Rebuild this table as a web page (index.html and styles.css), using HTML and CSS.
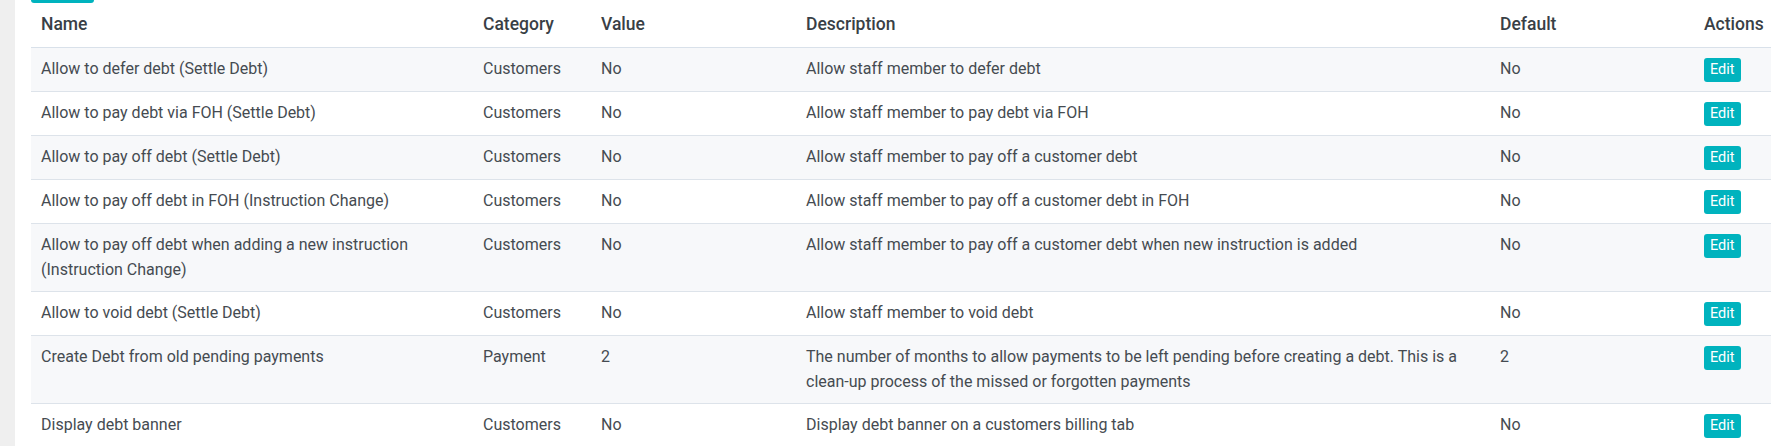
FILE: index.html
```html
<!DOCTYPE html>
<html lang="en">
<head>
<meta charset="utf-8">
<title>Settings</title>
<link rel="stylesheet" href="styles.css">
</head>
<body>
<div class="layout">
  <aside class="sidebar"></aside>
  <main class="content">
    <div class="tab-strip"><span class="tab"></span></div>
    <table class="settings">
      <colgroup>
        <col class="c-name"><col class="c-cat"><col class="c-val"><col class="c-desc"><col class="c-def"><col class="c-act">
      </colgroup>
      <thead>
        <tr><th>Name</th><th>Category</th><th>Value</th><th>Description</th><th>Default</th><th>Actions</th></tr>
      </thead>
      <tbody>
        <tr><td>Allow to defer debt (Settle Debt)</td><td>Customers</td><td>No</td><td>Allow staff member to defer debt</td><td>No</td><td><button class="btn-edit">Edit</button></td></tr>
        <tr><td>Allow to pay debt via FOH (Settle Debt)</td><td>Customers</td><td>No</td><td>Allow staff member to pay debt via FOH</td><td>No</td><td><button class="btn-edit">Edit</button></td></tr>
        <tr><td>Allow to pay off debt (Settle Debt)</td><td>Customers</td><td>No</td><td>Allow staff member to pay off a customer debt</td><td>No</td><td><button class="btn-edit">Edit</button></td></tr>
        <tr><td>Allow to pay off debt in FOH (Instruction Change)</td><td>Customers</td><td>No</td><td>Allow staff member to pay off a customer debt in FOH</td><td>No</td><td><button class="btn-edit">Edit</button></td></tr>
        <tr><td>Allow to pay off debt when adding a new instruction (Instruction Change)</td><td>Customers</td><td>No</td><td>Allow staff member to pay off a customer debt when new instruction is added</td><td>No</td><td><button class="btn-edit">Edit</button></td></tr>
        <tr><td>Allow to void debt (Settle Debt)</td><td>Customers</td><td>No</td><td>Allow staff member to void debt</td><td>No</td><td><button class="btn-edit">Edit</button></td></tr>
        <tr><td>Create Debt from old pending payments</td><td>Payment</td><td>2</td><td>The number of months to allow payments to be left pending before creating a debt. This is a clean-up process of the missed or forgotten payments</td><td>2</td><td><button class="btn-edit">Edit</button></td></tr>
        <tr><td>Display debt banner</td><td>Customers</td><td>No</td><td>Display debt banner on a customers billing tab</td><td>No</td><td><button class="btn-edit">Edit</button></td></tr>
      </tbody>
    </table>
  </main>
</div>
</body>
</html>
```

FILE: styles.css
```css
* { box-sizing: border-box; }
html, body {
  margin: 0;
  height: 100%;
  overflow: hidden;
  background: #ffffff;
}
body {
  font-family: Roboto, "Liberation Sans", Arial, sans-serif;
  font-size: 16px;
  color: #454b51;
}
.layout {
  display: flex;
  min-height: 100%;
}
.sidebar {
  flex: 0 0 15px;
  background: #efefef;
}
.content {
  flex: 1 1 auto;
  padding-left: 16px;
  min-width: 0;
}
.tab-strip {
  height: 3px;
  display: flex;
}
.tab {
  width: 63px;
  height: 3px;
  background: #00b3be;
  border-radius: 0 0 4px 4px;
}
.settings {
  width: 1740px;
  table-layout: fixed;
  border-collapse: collapse;
}
.c-name { width: 442px; }
.c-cat { width: 118px; }
.c-val { width: 205px; }
.c-desc { width: 694px; }
.c-def { width: 204px; }
.c-act { width: 77px; }
.settings th {
  text-align: left;
  font-size: 17.5px;
  font-weight: 500;
  color: #393f46;
  padding: 9px 10px 11px;
  line-height: 24px;
  border-bottom: 1px solid #d9e1ea;
  white-space: nowrap;
}
.settings td {
  padding: 9px 10px;
  line-height: 24.5px;
  vertical-align: top;
  border-bottom: 1px solid #dde3ea;
}
.settings tbody tr:nth-child(odd) td {
  background: #f7f8fa;
}
.btn-edit {
  display: inline-block;
  vertical-align: top;
  margin-top: 1px;
  height: 24px;
  padding: 0 6px;
  border: 0;
  border-radius: 3px;
  background: #00b3be;
  color: #ffffff;
  font-family: Roboto, "Liberation Sans", Arial, sans-serif;
  font-size: 14.5px;
  line-height: 24px;
}
```
